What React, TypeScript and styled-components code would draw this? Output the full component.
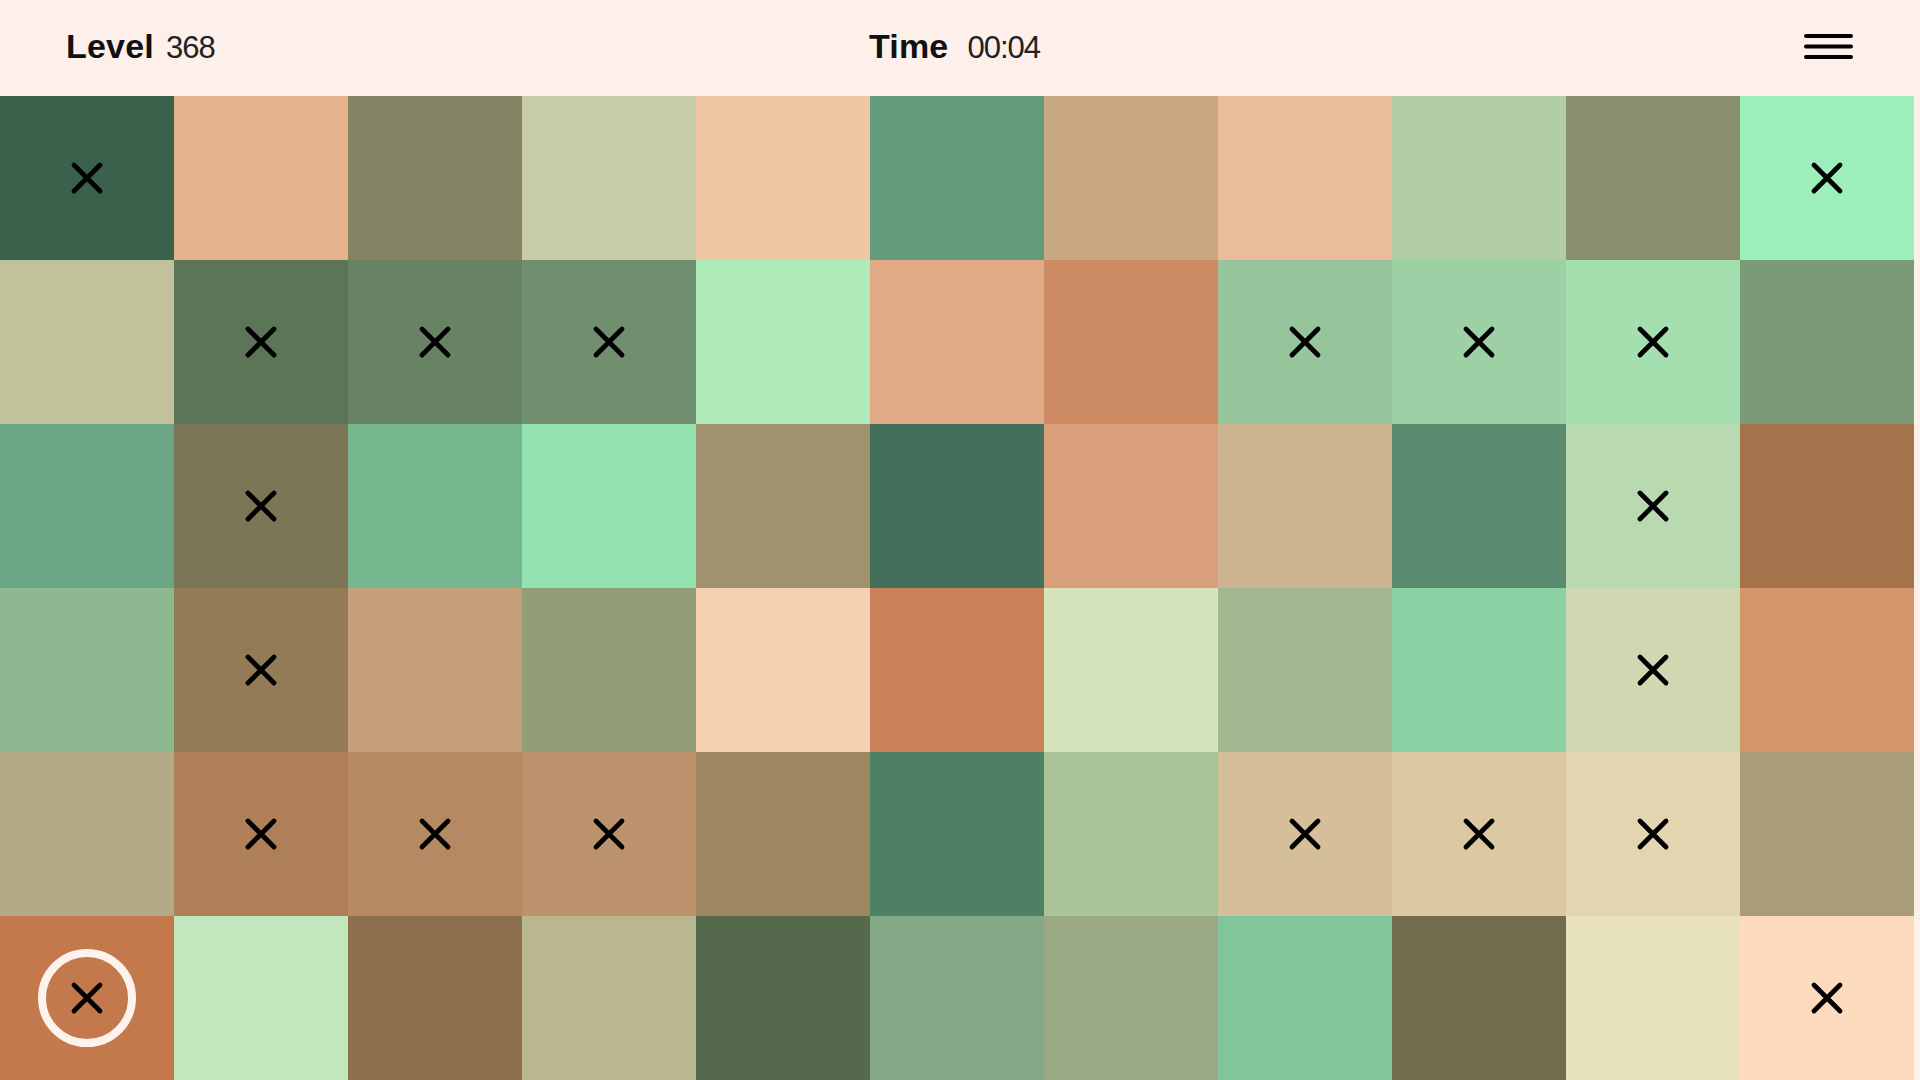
import styled, { createGlobalStyle } from "styled-components";

const GlobalStyle = createGlobalStyle`
  html, body {
    margin: 0;
    padding: 0;
    background: #fdf0eb;
    font-family: "Liberation Sans", Arial, sans-serif;
  }
`;

const board: string[][] = [
  ["#3a614b", "#e6b38f", "#838463", "#c8cca6", "#f0c7a4", "#639a7a", "#c8a983", "#eabc9a", "#b2cea5", "#8a8f6d", "#9cefba"],
  ["#c1c19b", "#5c7457", "#688264", "#718e6f", "#b0ebbc", "#e0aa85", "#cd8c63", "#96c49b", "#9ed0a5", "#a5dfb0", "#7b9b78"],
  ["#6aa684", "#7a7656", "#77b78f", "#93e2b0", "#a2916e", "#42705a", "#d99f7a", "#cdb390", "#5a8b6e", "#b9dab1", "#a4734c"],
  ["#8db890", "#937b58", "#c49f78", "#939e79", "#f6d1b1", "#c98259", "#d6e4bc", "#a2b68f", "#8ad2a3", "#cfd8b0", "#d4956b"],
  ["#b2aa86", "#af7f58", "#b58a63", "#bc936d", "#9c8762", "#4e8063", "#aac49a", "#d5bf9a", "#dcc8a2", "#e3d5b0", "#a89d78"],
  ["#c4794d", "#c3e7bd", "#8d704d", "#b8b78f", "#57694d", "#84a986", "#9ba985", "#82c59a", "#726c4c", "#e8e1bd", "#fcdabd"],
];

// fixed tiles, marked with a cross
const fixed: Record<number, number[]> = {
  0: [0, 10],
  1: [1, 2, 3, 7, 8, 9],
  2: [1, 9],
  3: [1, 9],
  4: [1, 2, 3, 7, 8, 9],
  5: [0, 10],
};

const selected = { row: 5, col: 0 };

function Cross() {
  return (
    <svg width="34" height="34" viewBox="0 0 34 34">
      <path
        d="M4 4 L30 30 M30 4 L4 30"
        stroke="#000"
        strokeWidth="4.8"
        strokeLinecap="round"
      />
    </svg>
  );
}

function MenuIcon() {
  return (
    <svg width="49" height="30" viewBox="0 0 49 30">
      <path
        d="M2 4 H47 M2 14.5 H47 M2 25 H47"
        stroke="#000"
        strokeWidth="4"
        strokeLinecap="round"
      />
    </svg>
  );
}

export default function App(): JSX.Element {
  return (
    <>
      <GlobalStyle />
      <Page>
        <Header>
          <Stat>
            <Label>Level</Label>
            <Value>368</Value>
          </Stat>
          <Stat $center>
            <Label>Time</Label>
            <Value $gap={19}>00:04</Value>
          </Stat>
          <MenuButton aria-label="menu">
            <MenuIcon />
          </MenuButton>
        </Header>
        <Board>
          {board.map((row, r) =>
            row.map((color, c) => {
              const isFixed = fixed[r]?.includes(c);
              const isSelected = selected.row === r && selected.col === c;
              return (
                <Tile key={`${r}-${c}`} $color={color}>
                  {isSelected ? (
                    <Ring>{isFixed && <Cross />}</Ring>
                  ) : (
                    isFixed && <Cross />
                  )}
                </Tile>
              );
            })
          )}
        </Board>
      </Page>
    </>
  );
}

const Page = styled.div`
  width: 1920px;
  height: 1080px;
  display: flex;
  flex-direction: column;
  overflow: hidden;
`;

const Header = styled.header`
  height: 96px;
  box-sizing: border-box;
  padding: 0 67px 4px 66px;
  display: grid;
  grid-template-columns: 1fr auto 1fr;
  align-items: center;
  background: #fdf0eb;
`;

const Stat = styled.div<{ $center?: boolean }>`
  display: flex;
  align-items: baseline;
  justify-self: ${(p) => (p.$center ? "center" : "start")};
  transform: ${(p) => (p.$center ? "translateX(-5px)" : "none")};
`;

const Label = styled.span`
  font-size: 34px;
  font-weight: 700;
  color: #111;
  letter-spacing: 0.2px;
`;

const Value = styled.span<{ $gap?: number }>`
  margin-left: ${(p) => p.$gap ?? 12}px;
  font-size: 31px;
  font-weight: 400;
  color: #222;
  letter-spacing: -1px;
`;

const MenuButton = styled.button`
  justify-self: end;
  border: 0;
  padding: 0;
  background: none;
  display: flex;
  margin-top: 2px;
`;

const Board = styled.div`
  display: grid;
  grid-template-columns: repeat(11, 174px);
  grid-auto-rows: 164px;
`;

const Tile = styled.div<{ $color: string }>`
  background: ${(p) => p.$color};
  display: flex;
  align-items: center;
  justify-content: center;
`;

const Ring = styled.div`
  width: 98px;
  height: 98px;
  box-sizing: border-box;
  border: 8px solid #fdf2ec;
  border-radius: 50%;
  display: flex;
  align-items: center;
  justify-content: center;
`;
